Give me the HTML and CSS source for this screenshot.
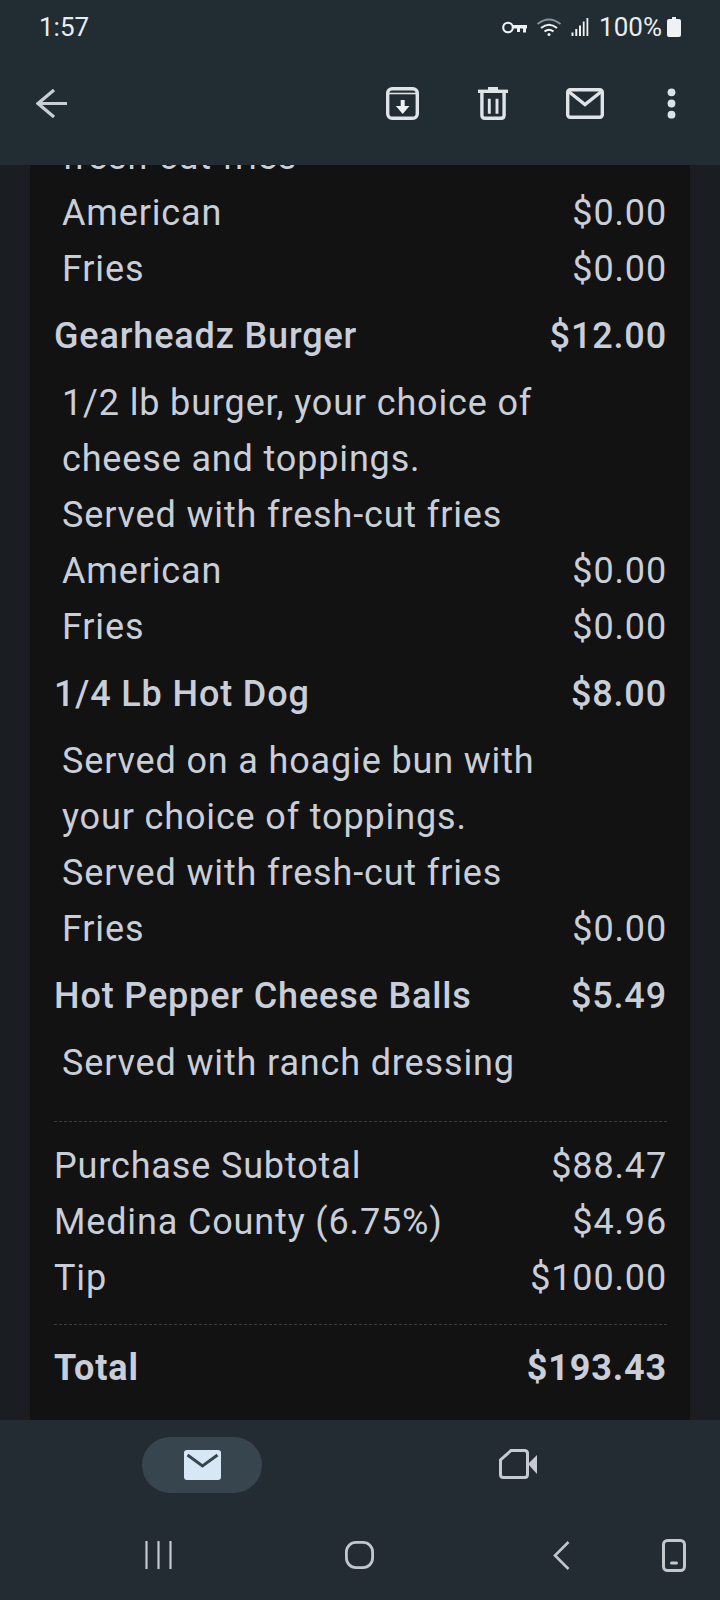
FILE: index.html
```html
<!DOCTYPE html>
<html lang="en">
<head>
<meta charset="utf-8">
<title>Receipt</title>
<link rel="stylesheet" href="styles.css">
</head>
<body>
<div class="screen">
  <header class="appbar">
    <div class="status">
      <span class="time">1:57</span>
      <div class="status-right">
        <svg class="ic-key" viewBox="0 0 25 13"><circle cx="6" cy="6.500" r="4.800" fill="none" stroke="#eef2f4" stroke-width="2.100"/><path d="M10.500 4h14.500v3.500h-1v4h-3v-4h-3v3.500h-3V7.500h-4.500z" fill="#eef2f4"/></svg>
        <svg class="ic-wifi" viewBox="0 0 26 18"><path d="M1.500 6Q13-3 24.500 6" fill="none" stroke="#8a9197" stroke-width="2"/><path d="M5 10Q13 3.500 21 10M8.500 13.500Q13 10 17.500 13.500" fill="none" stroke="#eef2f4" stroke-width="2"/><circle cx="13" cy="16.500" r="1.500" fill="#eef2f4"/></svg>
        <svg class="ic-signal" viewBox="0 0 18 18"><path d="M.5 14.500h2V18h-2zM4.300 11h2v7h-2zM8 7.500h2V18H8zM11.800 3.500h1.800V18h-1.800zM15.500 0h1.800v18h-1.800z" fill="#eef2f4"/></svg>
        <span class="batt-text">100%</span>
        <svg class="ic-batt" viewBox="0 0 14 20"><path d="M5 0h4v2h3q2 0 2 2v14q0 2-2 2H2q-2 0-2-2V4q0-2 2-2h3z" fill="#eef2f4"/></svg>
      </div>
    </div>
    <div class="toolbar">
      <svg class="ic-back" viewBox="0 0 31 29"><path d="M18 1 2 14.500 18 28M2 14.500h29" fill="none" stroke="#c9ced6" stroke-width="3.200"/></svg>
      <div class="actions">
        <svg class="ic-archive" viewBox="0 0 33 33"><rect x="1.700" y="1.700" width="29.600" height="29.600" rx="4.500" fill="none" stroke="#dfe4e8" stroke-width="3.400"/><path d="M2 6.500h29" stroke="#dfe4e8" stroke-width="1.600"/><path d="M14.700 13h4v6h4.800l-6.800 8-6.800-8h4.800z" fill="#eef2f4"/></svg>
        <svg class="ic-trash" viewBox="0 0 30 33"><path d="M0 4.300h30" stroke="#dfe4e8" stroke-width="3.400"/><path d="M10 1.500h10" stroke="#dfe4e8" stroke-width="3"/><path d="M3.900 5v23.300q0 3 3 3h16.200q3 0 3-3V5" fill="none" stroke="#dfe4e8" stroke-width="3.400"/><path d="M11.300 11.700v15M19 11.700v15" stroke="#dfe4e8" stroke-width="2.900"/></svg>
        <svg class="ic-mail" viewBox="0 0 38 31"><rect x="1.700" y="1.700" width="34.600" height="27.600" rx="2.500" fill="none" stroke="#dfe4e8" stroke-width="3.400"/><path d="M2 3l17 13.500L36 3" fill="none" stroke="#dfe4e8" stroke-width="3.400"/></svg>
        <svg class="ic-more" viewBox="0 0 9 31"><circle cx="4.500" cy="4.300" r="3.900" fill="#d9e2ea"/><circle cx="4.500" cy="15.500" r="3.900" fill="#d9e2ea"/><circle cx="4.500" cy="26.700" r="3.900" fill="#d9e2ea"/></svg>
      </div>
    </div>
  </header>

  <main class="viewport">
    <section class="card">
      <div class="clipped"><p class="line sub">fresh-cut fries</p></div>
      <div class="line sub row"><span>American</span><span>$0.00</span></div>
      <div class="line sub row"><span>Fries</span><span>$0.00</span></div>
      <div class="line head row"><span>Gearheadz Burger</span><span>$12.00</span></div>
      <p class="line sub">1/2 lb burger, your choice of</p>
      <p class="line sub">cheese and toppings.</p>
      <p class="line sub">Served with fresh-cut fries</p>
      <div class="line sub row"><span>American</span><span>$0.00</span></div>
      <div class="line sub row"><span>Fries</span><span>$0.00</span></div>
      <div class="line head row"><span>1/4 Lb Hot Dog</span><span>$8.00</span></div>
      <p class="line sub">Served on a hoagie bun with</p>
      <p class="line sub">your choice of toppings.</p>
      <p class="line sub">Served with fresh-cut fries</p>
      <div class="line sub row"><span>Fries</span><span>$0.00</span></div>
      <div class="line head row"><span>Hot Pepper Cheese Balls</span><span>$5.49</span></div>
      <p class="line sub">Served with ranch dressing</p>
      <div class="summary">
        <div class="line row"><span>Purchase Subtotal</span><span>$88.47</span></div>
        <div class="line row"><span>Medina County (6.75%)</span><span>$4.96</span></div>
        <div class="line row"><span>Tip</span><span>$100.00</span></div>
      </div>
      <div class="line total row"><span>Total</span><span>$193.43</span></div>
    </section>
  </main>

  <footer class="bottom">
    <nav class="tabs">
      <div class="pill">
        <svg class="ic-tabmail" viewBox="0 0 37 30"><rect width="37" height="30" rx="3" fill="#d8e7f6"/><path d="M3.500 5 18.500 16 33.500 5" fill="none" stroke="#37454f" stroke-width="3"/></svg>
      </div>
      <svg class="ic-meet" viewBox="0 0 38 30"><path d="M12 1.500h13.500q3 0 3 3v21q0 3-3 3H4.500q-3 0-3-3V11z" fill="none" stroke="#c5cbd1" stroke-width="3"/><path d="M29 15 38 6v19z" fill="#c5cbd1"/></svg>
    </nav>
    <div class="sysnav">
      <svg class="ic-recents" viewBox="0 0 27 28"><path d="M1.500 0v28M13.500 0v28M25.500 0v28" stroke="#c2c7cc" stroke-width="2.200"/></svg>
      <svg class="ic-home" viewBox="0 0 29 28"><rect x="1.400" y="1.400" width="26.200" height="25.200" rx="9.500" fill="none" stroke="#c2c7cc" stroke-width="2.800"/></svg>
      <svg class="ic-sysback" viewBox="0 0 17 29"><path d="M15.500 1 2 14.500 15.500 28" fill="none" stroke="#c2c7cc" stroke-width="2.600"/></svg>
      <svg class="ic-phone" viewBox="0 0 24 33"><rect x="1.500" y="1.500" width="21" height="30" rx="4" fill="none" stroke="#c2c7cc" stroke-width="3"/><rect x="8" y="22.500" width="8" height="3" rx="1.500" fill="#c2c7cc"/></svg>
    </div>
  </footer>
</div>
</body>
</html>
```
FILE: styles.css
```css
* { box-sizing: border-box; }
html, body { margin: 0; padding: 0; }
body { background: #1a1e23; font-family: Roboto, "Noto Sans", sans-serif; }
svg { display: block; flex: none; }
.screen { width: 720px; height: 1600px; display: flex; flex-direction: column; overflow: hidden; }

.appbar { height: 165px; flex: none; background: #222c33; }
.status { height: 54px; display: flex; justify-content: space-between; align-items: center; padding: 0 39px; }
.time { font-size: 26px; color: #e8edf0; }
.status-right { display: flex; align-items: center; }
.batt-text { font-size: 26px; color: #e8edf0; margin-left: 10px; margin-right: 5px; }
.ic-key { width: 25px; height: 13px; margin-right: 9px; }
.ic-wifi { width: 26px; height: 18px; margin-right: 9px; }
.ic-signal { width: 18px; height: 18px; }
.ic-batt { width: 14px; height: 20px; }

.toolbar { height: 99px; display: flex; justify-content: space-between; align-items: center; padding: 0 44px 0 36px; }
.ic-back { width: 31px; height: 29px; }
.actions { display: flex; align-items: center; }
.ic-archive { width: 33px; height: 33px; margin-right: 59px; }
.ic-trash { width: 30px; height: 33px; margin-right: 58px; }
.ic-mail { width: 38px; height: 31px; margin-right: 63px; }
.ic-more { width: 9px; height: 31px; }

.viewport { flex: 1; min-height: 0; overflow: hidden; padding: 0 30px; }
.card { height: 100%; background: #121212; padding: 0 23px 0 24px; color: #c9ced8; }
.clipped { height: 20px; position: relative; overflow: hidden; }
.clipped .line { position: absolute; left: 0; right: 0; bottom: 0; }
.line { margin: 0; font-size: 36px; line-height: 56px; letter-spacing: 0.85px; }
.row { display: flex; justify-content: space-between; }
.sub { padding-left: 8px; }
.head { font-weight: 500; padding: 11px 0; }
.summary { margin-top: 30px; padding: 16px 0 18px; border-top: 1px dashed #3a3d40; border-bottom: 1px dashed #3a3d40; }
.total { font-weight: 700; padding-top: 15px; }

.bottom { height: 180px; flex: none; background: #232b33; }
.tabs { height: 90px; display: flex; align-items: flex-start; padding: 17px 0 0 142px; }
.pill { width: 120px; height: 56px; border-radius: 28px; background: #37454f; display: flex; align-items: center; justify-content: center; }
.ic-tabmail { width: 37px; height: 30px; }
.ic-meet { width: 38px; height: 30px; margin: 12px 0 0 237px; }
.sysnav { height: 90px; display: flex; align-items: center; padding-left: 145px; }
.ic-recents { width: 27px; height: 28px; margin-right: 173px; }
.ic-home { width: 29px; height: 28px; margin-right: 179px; }
.ic-sysback { width: 17px; height: 29px; margin-right: 92px; }
.ic-phone { width: 24px; height: 33px; }
```
